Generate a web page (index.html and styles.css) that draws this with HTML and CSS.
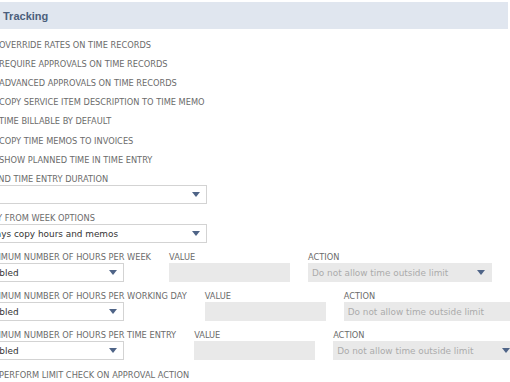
FILE: index.html
```html
<!DOCTYPE html>
<html lang="en">
<head>
  <meta charset="UTF-8" />
  <title>Time Tracking</title>
  <link rel="stylesheet" href="styles.css">
</head>
<body>
  <div class="page">
    <div class="section-head">
      <span class="section-title">Tracking</span>
    </div>

    <div class="fields">
      <div class="check-row"><span class="checkbox"></span><span class="check-label">OVERRIDE RATES ON TIME RECORDS</span></div>
      <div class="check-row"><span class="checkbox"></span><span class="check-label">REQUIRE APPROVALS ON TIME RECORDS</span></div>
      <div class="check-row"><span class="checkbox"></span><span class="check-label">ADVANCED APPROVALS ON TIME RECORDS</span></div>
      <div class="check-row"><span class="checkbox"></span><span class="check-label">COPY SERVICE ITEM DESCRIPTION TO TIME MEMO</span></div>
      <div class="check-row"><span class="checkbox"></span><span class="check-label">TIME BILLABLE BY DEFAULT</span></div>
      <div class="check-row"><span class="checkbox"></span><span class="check-label">COPY TIME MEMOS TO INVOICES</span></div>
      <div class="check-row"><span class="checkbox"></span><span class="check-label">SHOW PLANNED TIME IN TIME ENTRY</span></div>

      <div class="field">
        <div class="field-label">ROUND TIME ENTRY DURATION</div>
        <div class="select wide"><span class="select-value"></span><span class="arrow"></span></div>
      </div>

      <div class="field">
        <div class="field-label">COPY FROM WEEK OPTIONS</div>
        <div class="select wide"><span class="select-value">Always copy hours and memos</span><span class="arrow"></span></div>
      </div>

      <div class="limit-row">
        <div class="field">
          <div class="field-label">MAXIMUM NUMBER OF HOURS PER WEEK</div>
          <div class="select narrow"><span class="select-value">Disabled</span><span class="arrow"></span></div>
        </div>
        <div class="field">
          <div class="field-label">VALUE</div>
          <div class="input value disabled"></div>
        </div>
        <div class="field">
          <div class="field-label">ACTION</div>
          <div class="select action disabled"><span class="select-value">Do not allow time outside limit</span><span class="arrow"></span></div>
        </div>
      </div>

      <div class="limit-row">
        <div class="field">
          <div class="field-label">MAXIMUM NUMBER OF HOURS PER WORKING DAY</div>
          <div class="select narrow"><span class="select-value">Disabled</span><span class="arrow"></span></div>
        </div>
        <div class="field">
          <div class="field-label">VALUE</div>
          <div class="input value disabled"></div>
        </div>
        <div class="field">
          <div class="field-label">ACTION</div>
          <div class="input action disabled"><span class="select-value">Do not allow time outside limit</span></div>
        </div>
      </div>

      <div class="limit-row">
        <div class="field">
          <div class="field-label">MAXIMUM NUMBER OF HOURS PER TIME ENTRY</div>
          <div class="select narrow"><span class="select-value">Disabled</span><span class="arrow"></span></div>
        </div>
        <div class="field">
          <div class="field-label">VALUE</div>
          <div class="input value disabled"></div>
        </div>
        <div class="field">
          <div class="field-label">ACTION</div>
          <div class="select action disabled"><span class="select-value">Do not allow time outside limit</span><span class="arrow"></span></div>
        </div>
      </div>

      <div class="check-row last"><span class="checkbox"></span><span class="check-label">PERFORM LIMIT CHECK ON APPROVAL ACTION</span></div>
    </div>
  </div>
</body>
</html>
```

FILE: styles.css
```css
* {
  margin: 0;
  padding: 0;
  box-sizing: border-box;
  font-family: 'DejaVu Sans', Verdana, sans-serif;
}

html, body {
  overflow: hidden;
}

body {
  background-color: white;
  padding-top: 2px;
}

.page {
  width: 508px;
}

.section-head {
  background-color: #e0e6ef;
  height: 27px;
  display: flex;
  align-items: center;
  padding-left: 3px;
}

.section-title {
  font-family: 'Liberation Sans', Arial, sans-serif;
  font-size: 11px;
  font-weight: bold;
  color: #4c5f7c;
}

.fields {
  margin-left: -20px;
  padding-top: 6px;
  display: flex;
  flex-direction: column;
}

.check-row {
  display: flex;
  align-items: center;
  height: 19.2px;
}

.check-row.last {
  margin-top: 5px;
}

.checkbox {
  width: 13px;
  height: 13px;
  border: 1px solid #b8b8b8;
  border-radius: 2px;
  margin-right: 6px;
  background-color: white;
}

.check-label, .field-label {
  font-size: 8.25px;
  color: #6b6b6b;
  white-space: nowrap;
}

.field {
  display: flex;
  flex-direction: column;
}

.fields > .field {
  margin-top: 4px;
}

.fields > .field + .field, .limit-row {
  margin-top: 8px;
}

.field-label {
  line-height: 12px;
}

.limit-row {
  display: flex;
  gap: 18px;
}

.select, .input {
  height: 19px;
  border: 1px solid #d3d3d3;
  background-color: white;
  display: flex;
  align-items: center;
  justify-content: space-between;
  padding: 0 6px 0 3px;
}

.select-value {
  font-size: 8.9px;
  color: #333;
  white-space: nowrap;
}

.arrow {
  width: 0;
  height: 0;
  border-left: 4.5px solid transparent;
  border-right: 4.5px solid transparent;
  border-top: 5px solid #4f6487;
}

.wide, .narrow {
  margin-left: -4px;
}

.wide {
  width: 231px;
}

.narrow {
  width: 148px;
}

.value {
  width: 121px;
}

.action {
  width: 184px;
}

.disabled {
  background-color: #e9e9e9;
  border-color: #e9e9e9;
}

.disabled .select-value {
  color: #ababab;
}
```
